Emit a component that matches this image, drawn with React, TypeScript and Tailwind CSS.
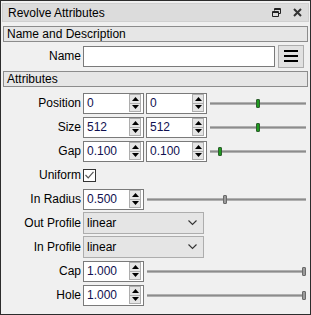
import React from 'react';

const font = { fontFamily: '"Liberation Sans", Arial, sans-serif' };

const Spin = () => (
    <div className="flex flex-col w-[12px] h-[18px] mr-[2px] border border-[#adadad] bg-[#e5e5e5]">
        <div className="flex-1 flex items-center justify-center border-b border-[#adadad]">
            <svg width="7" height="4" viewBox="0 0 7 4"><path d="M0 4 L3.5 0 L7 4 Z" fill="#000" /></svg>
        </div>
        <div className="flex-1 flex items-center justify-center">
            <svg width="7" height="4" viewBox="0 0 7 4"><path d="M0 0 L3.5 4 L7 0 Z" fill="#000" /></svg>
        </div>
    </div>
);

const NumBox = ({ value }: { value: string }) => (
    <div className="w-[61px] h-[21px] flex items-center bg-white border border-[#7a7a7a]">
        <span className="flex-1 pl-[3px] text-[12px] text-[#101050]">{value}</span>
        <Spin />
    </div>
);

const Slider = ({ pos, green }: { pos: number; green?: boolean }) => (
    <div className="relative flex-1 h-[21px] flex items-center">
        <div className="w-full h-[3px] bg-[#8c8c8c] border-y border-[#b0b0b0]" />
        <div
            className={`absolute top-[6px] w-[4px] h-[9px] rounded-[1px] border ${green ? 'bg-[#1f9a1f] border-[#2e5e2e]' : 'bg-[#9a9a9a] border-[#6a6a6a]'}`}
            style={{ left: `calc(${pos}% - 2px)` }}
        />
    </div>
);

const Row = ({ label, children }: { label: string; children: React.ReactNode }) => (
    <div className="h-[24px] flex items-center">
        <span className="w-[80px] pr-[2px] text-right text-[12px] text-black">{label}</span>
        <div className="flex-1 flex items-center">{children}</div>
    </div>
);

const Combo = ({ value }: { value: string }) => (
    <div className="w-[121px] h-[22px] flex items-center justify-between bg-[#e5e5e5] border border-[#adadad] pl-[3px] pr-[6px]">
        <span className="text-[12px] text-black">{value}</span>
        <svg width="9" height="6" viewBox="0 0 9 6"><path d="M0.5 0.5 L4.5 4.5 L8.5 0.5" fill="none" stroke="#333" strokeWidth="1.1" /></svg>
    </div>
);

const GroupHeader = ({ title }: { title: string }) => (
    <div className="h-[16px] flex items-center border border-[#8c8c8c] bg-[#e6e6e6] pl-[3px] text-[12px] text-black">
        {title}
    </div>
);

export default function App() {
    return (
        <div style={font} className="w-[311px] h-[315px] border border-[#2c2c2c] bg-[#f0f0f0] flex flex-col px-[1px] pt-[2px] overflow-hidden">
            <div className="h-[19px] flex items-center justify-between border border-[#d0d0d0] bg-[#dcdcdc] pl-[5px] pr-[6px]">
                <span className="text-[12px] text-black">Revolve Attributes</span>
                <div className="flex items-center gap-[12px]">
                    <svg width="9" height="9" viewBox="0 0 9 9">
                        <path d="M2.5 0.5 H8.5 V5.5 H6.5 M2.5 0.5 V2.5 M2.5 1.5 H8.5" fill="none" stroke="#222" strokeWidth="1" />
                        <path d="M0.5 3.5 H6.5 V8.5 H0.5 Z M0.5 4.5 H6.5" fill="none" stroke="#222" strokeWidth="1" />
                    </svg>
                    <svg width="9" height="9" viewBox="0 0 9 9">
                        <path d="M1 1 L8 8 M8 1 L1 8" stroke="#333" strokeWidth="2" />
                    </svg>
                </div>
            </div>

            <div className="flex flex-col px-[1px] pt-[4px]">
                <GroupHeader title="Name and Description" />
                <div className="h-[28px] flex items-center">
                    <span className="w-[80px] pr-[2px] text-right text-[12px] text-black">Name</span>
                    <div className="w-[192px] h-[21px] bg-white border border-[#7a7a7a]" />
                    <div className="ml-[3px] w-[26px] h-[23px] flex flex-col items-center justify-center gap-[3px] bg-[#e1e1e1] border border-[#adadad]">
                        <div className="w-[14px] h-[2px] bg-black" />
                        <div className="w-[14px] h-[2px] bg-black" />
                        <div className="w-[14px] h-[2px] bg-black" />
                    </div>
                </div>
                <div className="mt-[1px]">
                    <GroupHeader title="Attributes" />
                </div>

                <div className="flex flex-col mt-[4px] pr-[2px]">
                    <Row label="Position">
                        <NumBox value="0" />
                        <div className="ml-[2px]"><NumBox value="0" /></div>
                        <div className="flex-1 ml-[3px] flex"><Slider pos={50} green /></div>
                    </Row>
                    <Row label="Size">
                        <NumBox value="512" />
                        <div className="ml-[2px]"><NumBox value="512" /></div>
                        <div className="flex-1 ml-[3px] flex"><Slider pos={50} green /></div>
                    </Row>
                    <Row label="Gap">
                        <NumBox value="0.100" />
                        <div className="ml-[2px]"><NumBox value="0.100" /></div>
                        <div className="flex-1 ml-[3px] flex"><Slider pos={10} green /></div>
                    </Row>
                    <Row label="Uniform">
                        <div className="w-[13px] h-[13px] bg-white border border-[#333] flex items-center justify-center">
                            <svg width="9" height="8" viewBox="0 0 9 8"><path d="M0.5 4 L3.2 6.8 L8.5 0.8" fill="none" stroke="#555" strokeWidth="1.2" /></svg>
                        </div>
                    </Row>
                    <Row label="In Radius">
                        <NumBox value="0.500" />
                        <div className="flex-1 ml-[3px] flex"><Slider pos={49} /></div>
                    </Row>
                    <Row label="Out Profile">
                        <Combo value="linear" />
                    </Row>
                    <Row label="In Profile">
                        <Combo value="linear" />
                    </Row>
                    <Row label="Cap">
                        <NumBox value="1.000" />
                        <div className="flex-1 ml-[3px] flex"><Slider pos={99} /></div>
                    </Row>
                    <Row label="Hole">
                        <NumBox value="1.000" />
                        <div className="flex-1 ml-[3px] flex"><Slider pos={99} /></div>
                    </Row>
                </div>
            </div>
        </div>
    );
}
